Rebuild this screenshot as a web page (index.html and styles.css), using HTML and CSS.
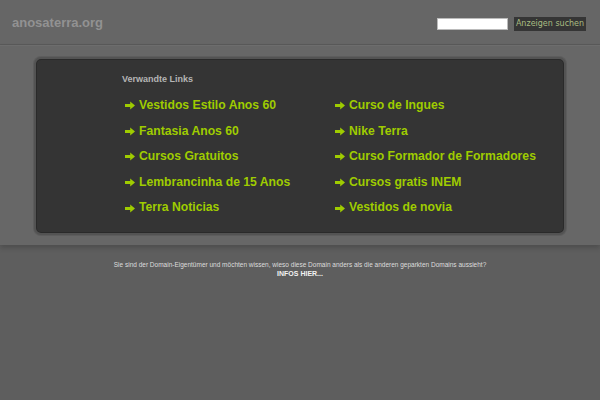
FILE: index.html
```html
<!DOCTYPE html>
<html lang="de">
<head>
<meta charset="utf-8">
<title>anosaterra.org</title>
<link rel="stylesheet" href="styles.css">
</head>
<body>
<header class="top">
  <div class="logo">anosaterra.org</div>
  <form class="search">
    <input class="search-input" type="text">
    <button class="search-btn" type="button">Anzeigen suchen</button>
  </form>
</header>
<section class="band">
  <div class="box">
    <div class="box-title">Verwandte Links</div>
    <ul class="links">
      <li><svg class="arrow" viewBox="0 0 10 9"><path d="M0 3.1H5.2V0.4L10 4.5 5.2 8.6V5.9H0Z"/></svg>Vestidos Estilo Anos 60</li>
      <li><svg class="arrow" viewBox="0 0 10 9"><path d="M0 3.1H5.2V0.4L10 4.5 5.2 8.6V5.9H0Z"/></svg>Curso de Ingues</li>
      <li><svg class="arrow" viewBox="0 0 10 9"><path d="M0 3.1H5.2V0.4L10 4.5 5.2 8.6V5.9H0Z"/></svg>Fantasia Anos 60</li>
      <li><svg class="arrow" viewBox="0 0 10 9"><path d="M0 3.1H5.2V0.4L10 4.5 5.2 8.6V5.9H0Z"/></svg>Nike Terra</li>
      <li><svg class="arrow" viewBox="0 0 10 9"><path d="M0 3.1H5.2V0.4L10 4.5 5.2 8.6V5.9H0Z"/></svg>Cursos Gratuitos</li>
      <li><svg class="arrow" viewBox="0 0 10 9"><path d="M0 3.1H5.2V0.4L10 4.5 5.2 8.6V5.9H0Z"/></svg>Curso Formador de Formadores</li>
      <li><svg class="arrow" viewBox="0 0 10 9"><path d="M0 3.1H5.2V0.4L10 4.5 5.2 8.6V5.9H0Z"/></svg>Lembrancinha de 15 Anos</li>
      <li><svg class="arrow" viewBox="0 0 10 9"><path d="M0 3.1H5.2V0.4L10 4.5 5.2 8.6V5.9H0Z"/></svg>Cursos gratis INEM</li>
      <li><svg class="arrow" viewBox="0 0 10 9"><path d="M0 3.1H5.2V0.4L10 4.5 5.2 8.6V5.9H0Z"/></svg>Terra Noticias</li>
      <li><svg class="arrow" viewBox="0 0 10 9"><path d="M0 3.1H5.2V0.4L10 4.5 5.2 8.6V5.9H0Z"/></svg>Vestidos de novia</li>
    </ul>
  </div>
</section>
<footer class="foot">
  <p class="foot-text">Sie sind der Domain-Eigentümer und möchten wissen, wieso diese Domain anders als die anderen geparkten Domains aussieht?</p>
  <p class="foot-link">INFOS HIER...</p>
</footer>
</body>
</html>
```
FILE: styles.css
```css
html, body {
  margin: 0;
  padding: 0;
}
body {
  background: #5e5e5e;
  font-family: "Liberation Sans", Arial, sans-serif;
  width: 600px;
  height: 400px;
  overflow: hidden;
}
.top {
  height: 45px;
  background: #666666;
  border-bottom: 1px solid #5a5a5a;
  display: flex;
  align-items: center;
  justify-content: space-between;
  padding: 0 14px 0 12px;
  box-sizing: border-box;
}
.logo {
  font-size: 13px;
  font-weight: bold;
  color: #929292;
}
.search {
  display: flex;
  align-items: center;
  gap: 6px;
  margin: 3px 0 0 0;
}
.search-input {
  width: 71px;
  height: 12px;
  box-sizing: border-box;
  border: 1px solid #bbbbbb;
  background: #ffffff;
  padding: 0;
  margin: 0;
}
.search-btn {
  height: 14px;
  width: 72px;
  padding: 0;
  margin: 0;
  border: none;
  background: #353535;
  color: #a9bd82;
  font-family: "DejaVu Sans", sans-serif;
  font-size: 8px;
  line-height: 14px;
}
.band {
  background: #676767;
  border-top: 1px solid #6d6d6d;
  padding: 11px 0 10px;
  box-shadow: 0 3px 5px rgba(0,0,0,0.18);
  position: relative;
}
.box {
  width: 532px;
  margin: 0 auto;
  box-sizing: border-box;
  background: #343434;
  border: 2px solid #535353;
  border-radius: 7px;
  box-shadow: inset 0 0 0 1px #2a2a2a, 0 0 0 1px #5d5d5d;
  padding: 15px 0 12px 86px;
}
.box-title {
  font-size: 9px;
  font-weight: bold;
  color: #b4b4b4;
  line-height: 11px;
  margin-bottom: 8px;
}
.links {
  list-style: none;
  margin: 0;
  padding: 0 0 0 3px;
  display: grid;
  grid-template-columns: 210px 200px;
  grid-auto-rows: 25.6px;
}
.links li {
  font-size: 12.2px;
  font-weight: bold;
  color: #9fcc00;
  line-height: 25.6px;
  white-space: nowrap;
  display: flex;
  align-items: center;
}
.arrow {
  width: 10px;
  height: 9px;
  fill: #9fcc00;
  margin-right: 4px;
  flex: none;
}
.foot {
  text-align: center;
  padding-top: 15px;
}
.foot-text {
  margin: 0;
  font-size: 6.5px;
  line-height: 9px;
  color: #dddddd;
}
.foot-link {
  margin: 0;
  font-size: 7px;
  line-height: 9px;
  font-weight: bold;
  color: #f2f2f2;
}
```
